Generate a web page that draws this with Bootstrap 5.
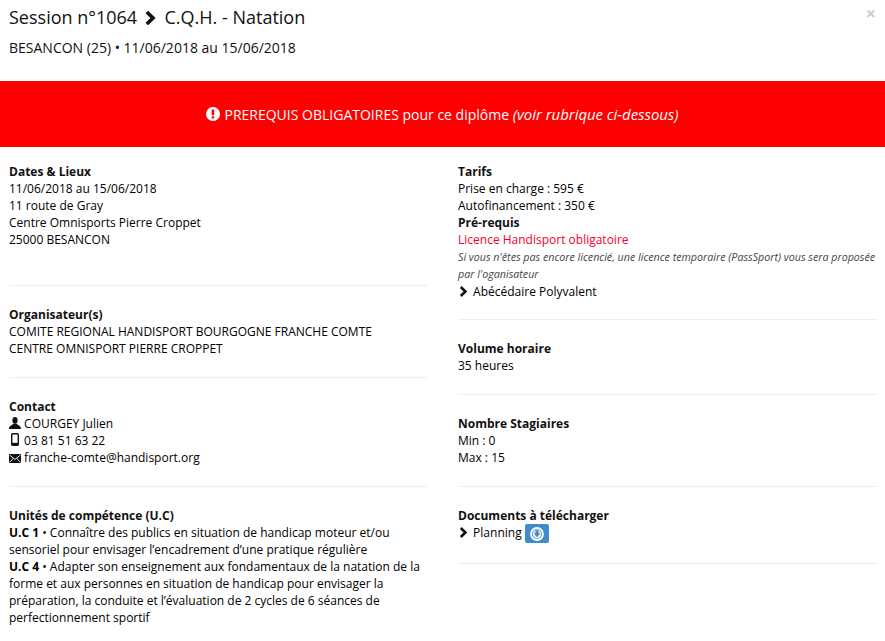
<!DOCTYPE html>
<html lang="fr">
<head>
<meta charset="utf-8">
<title>Session</title>
<link href="https://cdn.jsdelivr.net/npm/bootstrap@5.3.0/dist/css/bootstrap.min.css" rel="stylesheet">
<style>
html,body{background:#fff;}
body{font-family:"Open Sans","Liberation Sans",sans-serif;font-size:12px;line-height:17px;color:#000;overflow:hidden;}
.head-zone{padding:5px 9px 0;height:81px;position:relative;}
.head-title{font-size:18px;line-height:25px;margin:0 0 9px;font-weight:400;color:#111;}
.title-chev{margin:0 3px 0 1px;}
.head-sub{font-size:14px;line-height:18px;margin:0;color:#111;}
.close-x{position:absolute;top:6px;right:9px;font-size:18px;line-height:14px;font-weight:700;color:#000;opacity:.2;}
.alert-band{background:#f00;color:#fff;height:66px;font-size:14px;}
.alert-band em{font-size:14.9px;}
.cols{padding:16px 8px 0 9px;gap:30px;}
.info-col{width:419px;flex:none;}
.info-sec{border-bottom:1px solid #eee;padding-bottom:37px;margin-bottom:20px;}
.info-sec.tall{padding-bottom:20px;}
.info-sec.tall-note{padding-bottom:19px;}
.sec-label{font-weight:700;color:#111;}
.lic-red{color:#f5002d;}
.note-it{font-size:10.7px;font-style:italic;color:#444;padding-top:1px;}
.ico{display:inline-block;vertical-align:-1px;}
.list-chev{margin-right:1px;}
.dl-btn{background:#428bca;border-radius:2px;width:24px;height:19px;vertical-align:middle;}
</style>
</head>
<body>
<div class="head-zone">
  <h4 class="head-title">Session n°1064 <svg class="ico title-chev" width="14" height="14" viewBox="0 0 14 14"><path d="M3.8 1 L10 7 L3.8 13" fill="none" stroke="#111" stroke-width="3.6"/></svg> C.Q.H. - Natation</h4>
  <p class="head-sub">BESANCON (25) • 11/06/2018 au 15/06/2018</p>
  <span class="close-x">×</span>
</div>
<div class="alert-band d-flex align-items-center justify-content-center">
  <svg class="ico me-1" width="14" height="14" viewBox="0 0 14 14"><circle cx="7" cy="7" r="7" fill="#fff"/><rect x="5.7" y="2.5" width="2.6" height="5.8" rx=".6" fill="#f00"/><rect x="5.7" y="9.2" width="2.6" height="2.4" rx=".5" fill="#f00"/></svg>
  <span>PREREQUIS OBLIGATOIRES pour ce diplôme <em>(voir rubrique ci-dessous)</em></span>
</div>
<div class="cols d-flex">
  <div class="info-col">
    <div class="info-sec">
      <div class="sec-label">Dates &amp; Lieux</div>
      <div>11/06/2018 au 15/06/2018</div>
      <div>11 route de Gray</div>
      <div>Centre Omnisports Pierre Croppet</div>
      <div>25000 BESANCON</div>
    </div>
    <div class="info-sec tall">
      <div class="sec-label">Organisateur(s)</div>
      <div>COMITE REGIONAL HANDISPORT BOURGOGNE FRANCHE COMTE</div>
      <div>CENTRE OMNISPORT PIERRE CROPPET</div>
    </div>
    <div class="info-sec tall">
      <div class="sec-label">Contact</div>
      <div><svg class="ico" width="12" height="12" viewBox="0 0 12 12"><ellipse cx="6" cy="3.4" rx="2.6" ry="3.3" fill="#111"/><path d="M0 12 C0 8.6 3 8.4 4.4 6.8 H7.6 C9 8.4 12 8.6 12 12Z" fill="#111"/></svg> COURGEY Julien</div>
      <div><svg class="ico" width="12" height="13" viewBox="0 0 12 13"><rect x="2.7" y=".7" width="6.6" height="11.6" rx="1.2" fill="none" stroke="#111" stroke-width="1.4"/><rect x="2.7" y="9.8" width="6.6" height="2.5" fill="#111"/></svg> 03 81 51 63 22</div>
      <div><svg class="ico" width="12" height="9" viewBox="0 0 12 9"><rect width="12" height="9" fill="#111"/><path d="M.5 1 L6 5.4 L11.5 1 M.5 8.4 L4.4 4.2 M11.5 8.4 L7.6 4.2" fill="none" stroke="#fff" stroke-width=".9"/></svg> franche-comte@handisport.org</div>
    </div>
    <div>
      <div class="sec-label">Unités de compétence (U.C)</div>
      <div><strong>U.C 1</strong> • Connaître des publics en situation de handicap moteur et/ou sensoriel pour envisager l’encadrement d’une pratique régulière</div>
      <div><strong>U.C 4</strong> • Adapter son enseignement aux fondamentaux de la natation de la forme et aux personnes en situation de handicap pour envisager la préparation, la conduite et l’évaluation de 2 cycles de 6 séances de perfectionnement sportif</div>
    </div>
  </div>
  <div class="info-col">
    <div class="info-sec tall-note">
      <div class="sec-label">Tarifs</div>
      <div>Prise en charge : 595 €</div>
      <div>Autofinancement : 350 €</div>
      <div class="sec-label">Pré-requis</div>
      <div class="lic-red">Licence Handisport obligatoire</div>
      <div class="note-it">Si vous n'êtes pas encore licencié, une licence temporaire (PassSport) vous sera proposée par l'oganisateur</div>
      <div><svg class="ico list-chev" width="11" height="11" viewBox="0 0 11 11"><path d="M2.8 1 L7.4 5.5 L2.8 10" fill="none" stroke="#111" stroke-width="2.6"/></svg> Abécédaire Polyvalent</div>
    </div>
    <div class="info-sec tall">
      <div class="sec-label">Volume horaire</div>
      <div>35 heures</div>
    </div>
    <div class="info-sec tall">
      <div class="sec-label">Nombre Stagiaires</div>
      <div>Min : 0</div>
      <div>Max : 15</div>
    </div>
    <div class="info-sec tall">
      <div class="sec-label">Documents à télécharger</div>
      <div><svg class="ico list-chev" width="11" height="11" viewBox="0 0 11 11"><path d="M2.8 1 L7.4 5.5 L2.8 10" fill="none" stroke="#111" stroke-width="2.6"/></svg> Planning <span class="dl-btn d-inline-flex align-items-center justify-content-center"><svg width="14" height="14" viewBox="0 0 14 14"><circle cx="7" cy="7" r="6" fill="none" stroke="#fff" stroke-width="1.8"/><circle cx="7" cy="7" r="4.4" fill="#e8f0f8"/><path d="M5.4 3.2 H8.6 V6.2 H10.2 L7 10.2 L3.8 6.2 H5.4Z" fill="#428bca"/></svg></span></div>
    </div>
  </div>
</div>
<script src="https://cdn.jsdelivr.net/npm/bootstrap@5.3.0/dist/js/bootstrap.bundle.min.js"></script>
</body>
</html>
